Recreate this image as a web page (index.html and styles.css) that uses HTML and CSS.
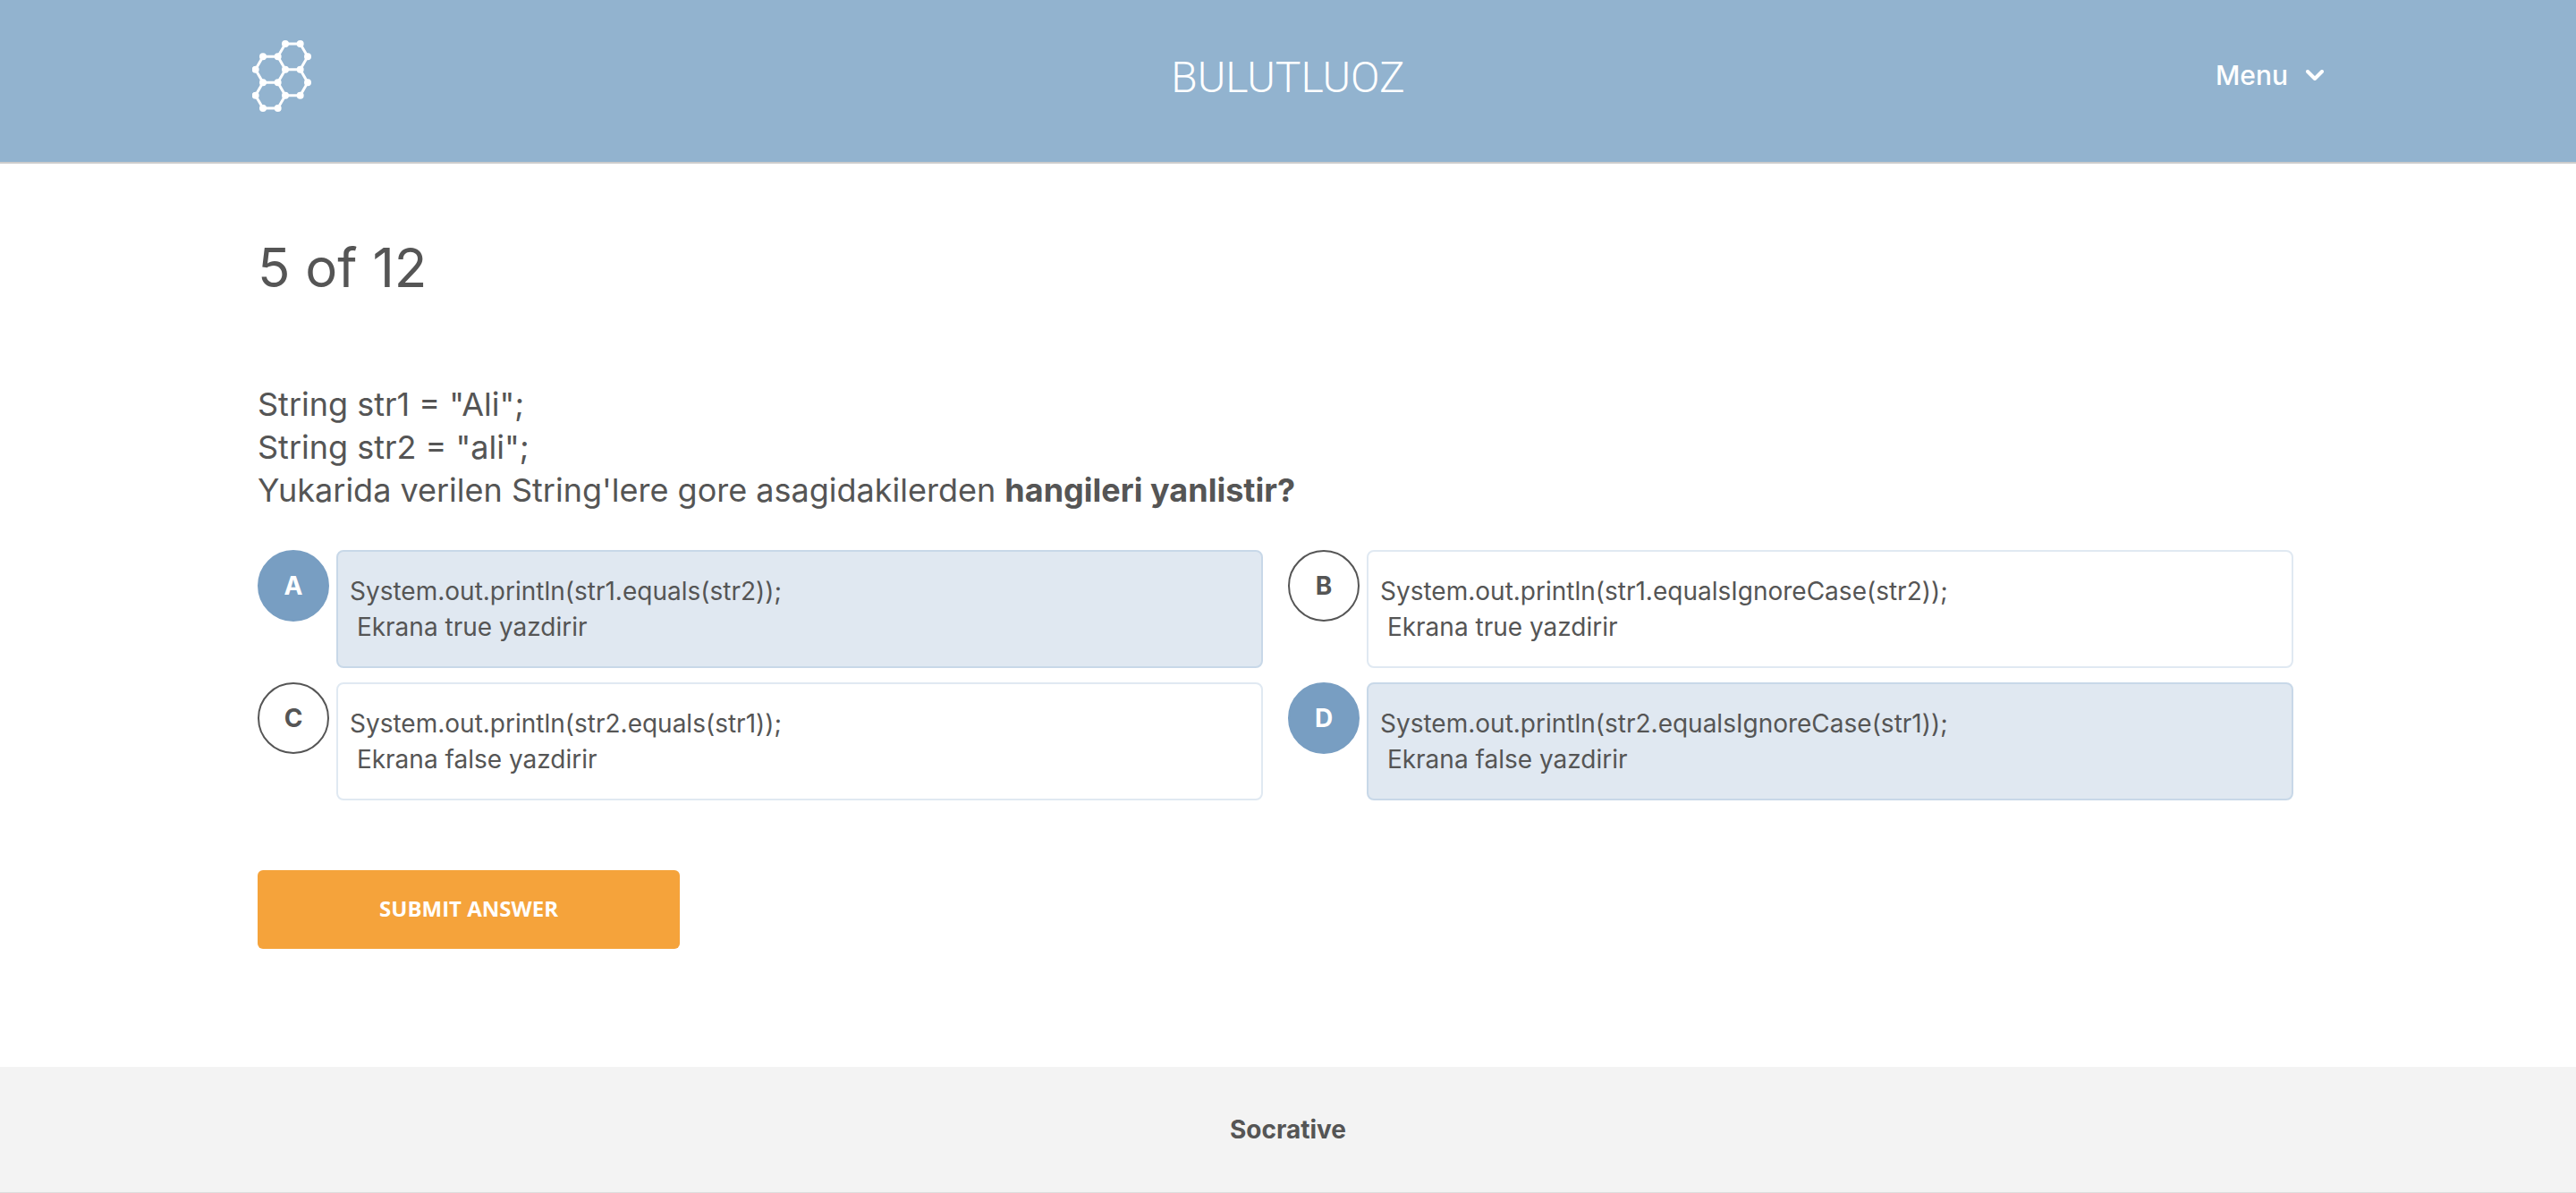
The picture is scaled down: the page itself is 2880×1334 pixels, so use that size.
FILE: index.html
```html
<!DOCTYPE html>
<html lang="en">
<head>
<meta charset="utf-8">
<meta name="viewport" content="width=device-width, initial-scale=1">
<title>Socrative</title>
<link rel="stylesheet" href="styles.css">
</head>
<body>
<header class="header">
  <a class="logo" href="#" aria-label="Socrative home">
    <svg width="66" height="80" viewBox="36 45 198 240" aria-hidden="true">
      <path class="logo-bonds" d="M147 57H197L222 100L197 143H147L122 100ZM122 100H72L47 143L72 187H122L147 143M197 143L222 187L197 230H147L122 187M72 187L47 230L72 273H122L147 230"/>
      <path class="logo-atoms" d="M147 57h0M197 57h0M222 100h0M197 143h0M147 143h0M122 100h0M72 100h0M47 143h0M72 187h0M122 187h0M222 187h0M197 230h0M147 230h0M47 230h0M72 273h0M122 273h0"/>
    </svg>
  </a>
  <div class="room">BULUTLUOZ</div>
  <button class="menu" type="button">Menu
    <svg class="chevron" width="20" height="12" viewBox="0 0 20 12" aria-hidden="true"><path d="M2 2L10 10L18 2"/></svg>
  </button>
</header>
<main class="main">
  <h1 class="progress">5 of 12</h1>
  <form>
    <p class="question">String str1 = "Ali";<br>String str2 = "ali";<br>Yukarida verilen String'lere gore asagidakilerden <strong>hangileri yanlistir?</strong></p>
    <div class="answers">
      <label class="answer"><input class="tick" type="checkbox" name="answer" value="A" checked><span class="letter">A</span><span class="text">System.out.println(str1.equals(str2));<br>&nbsp;Ekrana true yazdirir</span></label>
      <label class="answer"><input class="tick" type="checkbox" name="answer" value="B"><span class="letter">B</span><span class="text">System.out.println(str1.equalsIgnoreCase(str2));<br>&nbsp;Ekrana true yazdirir</span></label>
      <label class="answer"><input class="tick" type="checkbox" name="answer" value="C"><span class="letter">C</span><span class="text">System.out.println(str2.equals(str1));<br>&nbsp;Ekrana false yazdirir</span></label>
      <label class="answer"><input class="tick" type="checkbox" name="answer" value="D" checked><span class="letter">D</span><span class="text">System.out.println(str2.equalsIgnoreCase(str1));<br>&nbsp;Ekrana false yazdirir</span></label>
    </div>
    <button class="submit" type="button">SUBMIT ANSWER</button>
  </form>
</main>
<footer class="footer">Socrative</footer>
</body>
</html>
```
FILE: styles.css
```css
* { box-sizing: border-box; }

body {
  margin: 0;
  background: #fff;
  color: #555;
  font-family: Inter, "Liberation Sans", sans-serif;
  font-size: 28px;
  line-height: 40px;
}

.header {
  display: grid;
  grid-template-columns: 1fr auto 1fr;
  align-items: center;
  padding: 45px calc(10% - 6px) 56px;
  background: #92b3cf;
  border-bottom: 2px solid #ccc;
  color: #fff;
}

.logo {
  justify-self: start;
  display: flex;
}

.logo-bonds,
.logo-atoms,
.chevron path {
  fill: none;
  stroke: #fff;
  stroke-linecap: round;
  stroke-linejoin: round;
}

.logo-bonds { stroke-width: 9; }
.logo-atoms { stroke-width: 24; }
.chevron path { stroke-width: 4; }

.room {
  padding-top: 4px;
  font-family: Roboto, "Liberation Sans", sans-serif;
  font-size: 48px;
  font-weight: 300;
  line-height: 60px;
}

.menu {
  justify-self: end;
  display: flex;
  align-items: center;
  gap: 20px;
  padding: 0 0 2px;
  border: 0;
  background: none;
  color: inherit;
  font: 500 30px/40px Inter, "Liberation Sans", sans-serif;
}

.main { padding: 80px 10% 132px; }

.progress {
  margin: 0 0 93px;
  font-size: 60px;
  font-weight: 400;
  line-height: 72px;
}

.question {
  margin: 0 0 43px;
  font-size: 36px;
  line-height: 48px;
}

.answers {
  display: grid;
  grid-template-columns: 1fr 1fr;
  gap: 16px 28px;
  margin: 0 28px 78px 0;
}

.answer {
  display: grid;
  grid-template-columns: 80px 1fr;
  column-gap: 8px;
  align-items: start;
  cursor: pointer;
}

.tick {
  grid-area: 1 / 1;
  appearance: none;
  width: 80px;
  height: 80px;
  margin: 0;
  border: 2px solid #555;
  border-radius: 50%;
}

.letter {
  grid-area: 1 / 1;
  font-weight: 700;
  line-height: 80px;
  text-align: center;
}

.text {
  padding: 24px 13px;
  border: 2px solid #e0e9f2;
  border-radius: 8px;
}

.tick:checked {
  border-color: #789ec2;
  background: #789ec2;
}

.tick:checked + .letter {
  z-index: 1;
  color: #fff;
}

.tick:checked ~ .text {
  border-color: #c8d8e8;
  background: #e0e8f1;
}

.submit {
  display: block;
  width: 472px;
  max-width: 100%;
  padding: 23px 24px 25px;
  border: 0;
  border-radius: 6px;
  background: #f5a33b;
  color: #fff;
  font: 700 24px/40px "Open Sans", sans-serif;
}

.footer {
  padding: 50px 0;
  background: #f3f3f3;
  border-bottom: 1px solid #ddd;
  font-weight: 700;
  text-align: center;
}
```
